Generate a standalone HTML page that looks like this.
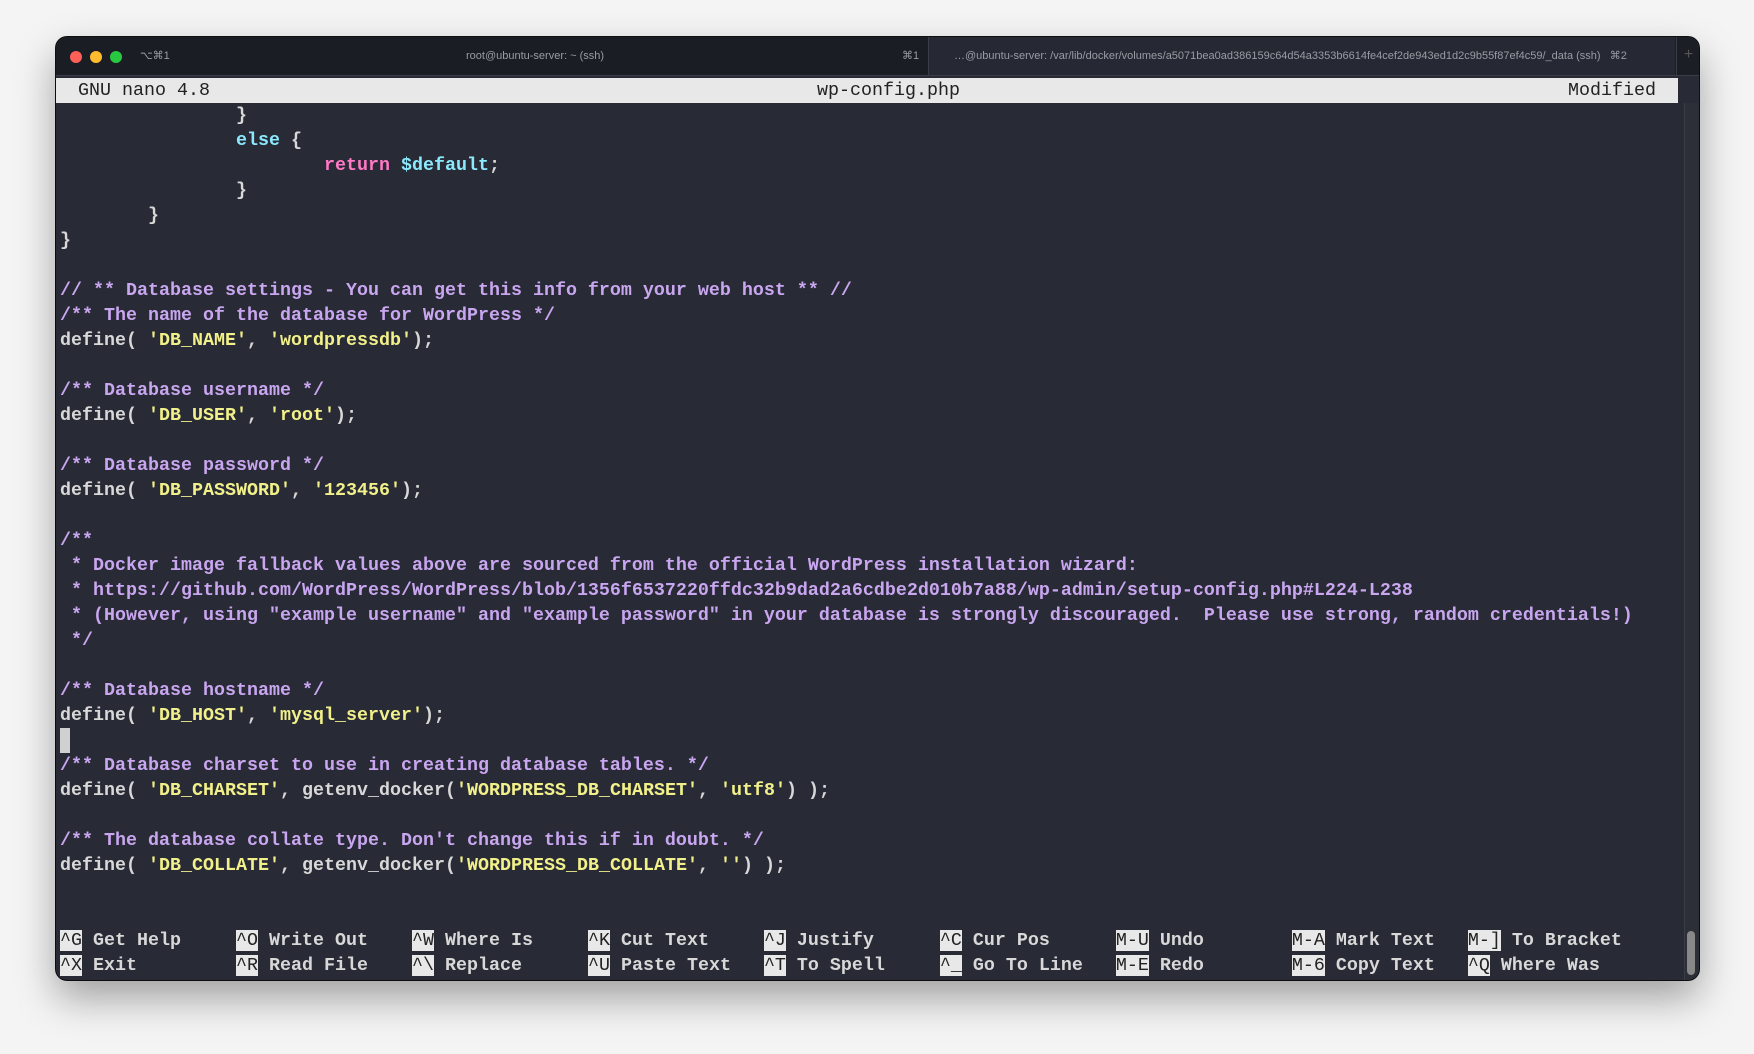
<!DOCTYPE html>
<html><head><meta charset="utf-8"><style>
html,body{margin:0;padding:0;width:1754px;height:1054px;background:#f4f4f4;overflow:hidden}
.win{position:absolute;left:56px;top:37px;width:1643px;height:943px;background:#282a35;border-radius:11px;overflow:hidden;box-shadow:0 18px 40px rgba(0,0,0,.35),0 0 0 1px #111;}
.tb{position:absolute;left:0;top:0;width:100%;height:38px;background:#1c1e26;border-bottom:1px solid #3a3c46}
.tab1{position:absolute;left:0;top:0;width:872px;height:38px;background:#1b1d25;border-right:1px solid #3a3c46}
.tab2{position:absolute;left:873px;top:0;width:746px;height:38px;background:#262833}
.plus{position:absolute;left:1620px;top:0;width:23px;height:38px;background:#1c1e26;border-left:1px solid #3a3c46;color:#555;font-family:"Liberation Sans",sans-serif;font-size:16px;text-align:center;line-height:36px}
.dot{position:absolute;top:14px;width:12px;height:12px;border-radius:50%}
.tt{position:absolute;top:0;font-family:"Liberation Sans",sans-serif;font-size:11px;line-height:38px;color:#9a9ca4;white-space:nowrap}
.txt{position:absolute;left:4px;top:41px;font-family:"Liberation Mono",monospace;font-weight:bold;font-size:18.33px;line-height:25px;color:#d8d8d8;white-space:pre}
.row{position:absolute;left:0;height:25px;line-height:25px;white-space:pre}
.hdr{position:absolute;left:0;top:41px;width:1622px;height:25px;background:#e8e8e8;color:#222;font-family:"Liberation Mono",monospace;font-size:18.33px;line-height:25px;white-space:pre}
.c{color:#c9a6f0}.s{color:#f1f08a}.k{color:#8be9fd}.r{color:#ff79c6}
.key{background:#e8e8e8;color:#222;font-weight:normal}
.sb{position:absolute;left:1628px;top:66px;width:15px;height:877px;background:#2c2e38;border-left:1px solid #3a3c46}
.thumb{position:absolute;left:1631px;top:894px;width:8px;height:44px;background:#888;border-radius:4px}
</style></head><body>
<div class="win">
<div class="tb">
<div class="tab1"></div><div class="tab2"></div><div class="plus">+</div>
<div class="dot" style="left:14px;background:#fe5f57"></div>
<div class="dot" style="left:34px;background:#febc2e"></div>
<div class="dot" style="left:54px;background:#28c840"></div>
<div class="tt" style="left:84px">⌥⌘1</div>
<div class="tt" style="left:410px">root@ubuntu-server: ~ (ssh)</div>
<div class="tt" style="left:846px">⌘1</div>
<div class="tt" style="left:898px">…@ubuntu-server: /var/lib/docker/volumes/a5071bea0ad386159c64d54a3353b6614fe4cef2de943ed1d2c9b55f87ef4c59/_data (ssh)&nbsp;&nbsp; ⌘2</div>
</div>
<div class="hdr">  GNU nano 4.8<span style="position:absolute;left:761px">wp-config.php</span><span style="position:absolute;left:1512px">Modified</span></div>
<div class="sb"></div><div class="thumb"></div>
<div class="txt">
<div class="row" style="top:25px">                }</div>
<div class="row" style="top:50px">                <span class="k">else</span> {</div>
<div class="row" style="top:75px">                        <span class="r">return</span> <span class="k">$default</span>;</div>
<div class="row" style="top:100px">                }</div>
<div class="row" style="top:125px">        }</div>
<div class="row" style="top:150px">}</div>
<div class="row c" style="top:200px">// ** Database settings - You can get this info from your web host ** //</div>
<div class="row c" style="top:225px">/** The name of the database for WordPress */</div>
<div class="row" style="top:250px">define( <span class="s">'DB_NAME'</span>, <span class="s">'wordpressdb'</span>);</div>
<div class="row c" style="top:300px">/** Database username */</div>
<div class="row" style="top:325px">define( <span class="s">'DB_USER'</span>, <span class="s">'root'</span>);</div>
<div class="row c" style="top:375px">/** Database password */</div>
<div class="row" style="top:400px">define( <span class="s">'DB_PASSWORD'</span>, <span class="s">'123456'</span>);</div>
<div class="row c" style="top:450px">/**</div>
<div class="row c" style="top:475px"> * Docker image fallback values above are sourced from the official WordPress installation wizard:</div>
<div class="row c" style="top:500px"> * https://github.com/WordPress/WordPress/blob/1356f6537220ffdc32b9dad2a6cdbe2d010b7a88/wp-admin/setup-config.php#L224-L238</div>
<div class="row c" style="top:525px"> * (However, using "example username" and "example password" in your database is strongly discouraged.  Please use strong, random credentials!)</div>
<div class="row c" style="top:550px"> */</div>
<div class="row c" style="top:600px">/** Database hostname */</div>
<div class="row" style="top:625px">define( <span class="s">'DB_HOST'</span>, <span class="s">'mysql_server'</span>);</div>
<div class="row" style="top:650px"><span style="background:#d0d0d0;display:inline-block;width:10px;height:25px;vertical-align:top"></span></div>
<div class="row c" style="top:675px">/** Database charset to use in creating database tables. */</div>
<div class="row" style="top:700px">define( <span class="s">'DB_CHARSET'</span>, getenv_docker(<span class="s">'WORDPRESS_DB_CHARSET'</span>, <span class="s">'utf8'</span>) );</div>
<div class="row c" style="top:750px">/** The database collate type. Don't change this if in doubt. */</div>
<div class="row" style="top:775px">define( <span class="s">'DB_COLLATE'</span>, getenv_docker(<span class="s">'WORDPRESS_DB_COLLATE'</span>, <span class="s">''</span>) );</div>
<div class="row" style="top:850px"><span class="key">^G</span> Get Help     <span class="key">^O</span> Write Out    <span class="key">^W</span> Where Is     <span class="key">^K</span> Cut Text     <span class="key">^J</span> Justify      <span class="key">^C</span> Cur Pos      <span class="key">M-U</span> Undo        <span class="key">M-A</span> Mark Text   <span class="key">M-]</span> To Bracket</div>
<div class="row" style="top:875px"><span class="key">^X</span> Exit         <span class="key">^R</span> Read File    <span class="key">^\</span> Replace      <span class="key">^U</span> Paste Text   <span class="key">^T</span> To Spell     <span class="key">^_</span> Go To Line   <span class="key">M-E</span> Redo        <span class="key">M-6</span> Copy Text   <span class="key">^Q</span> Where Was</div>
</div>
</div>
</body></html>
